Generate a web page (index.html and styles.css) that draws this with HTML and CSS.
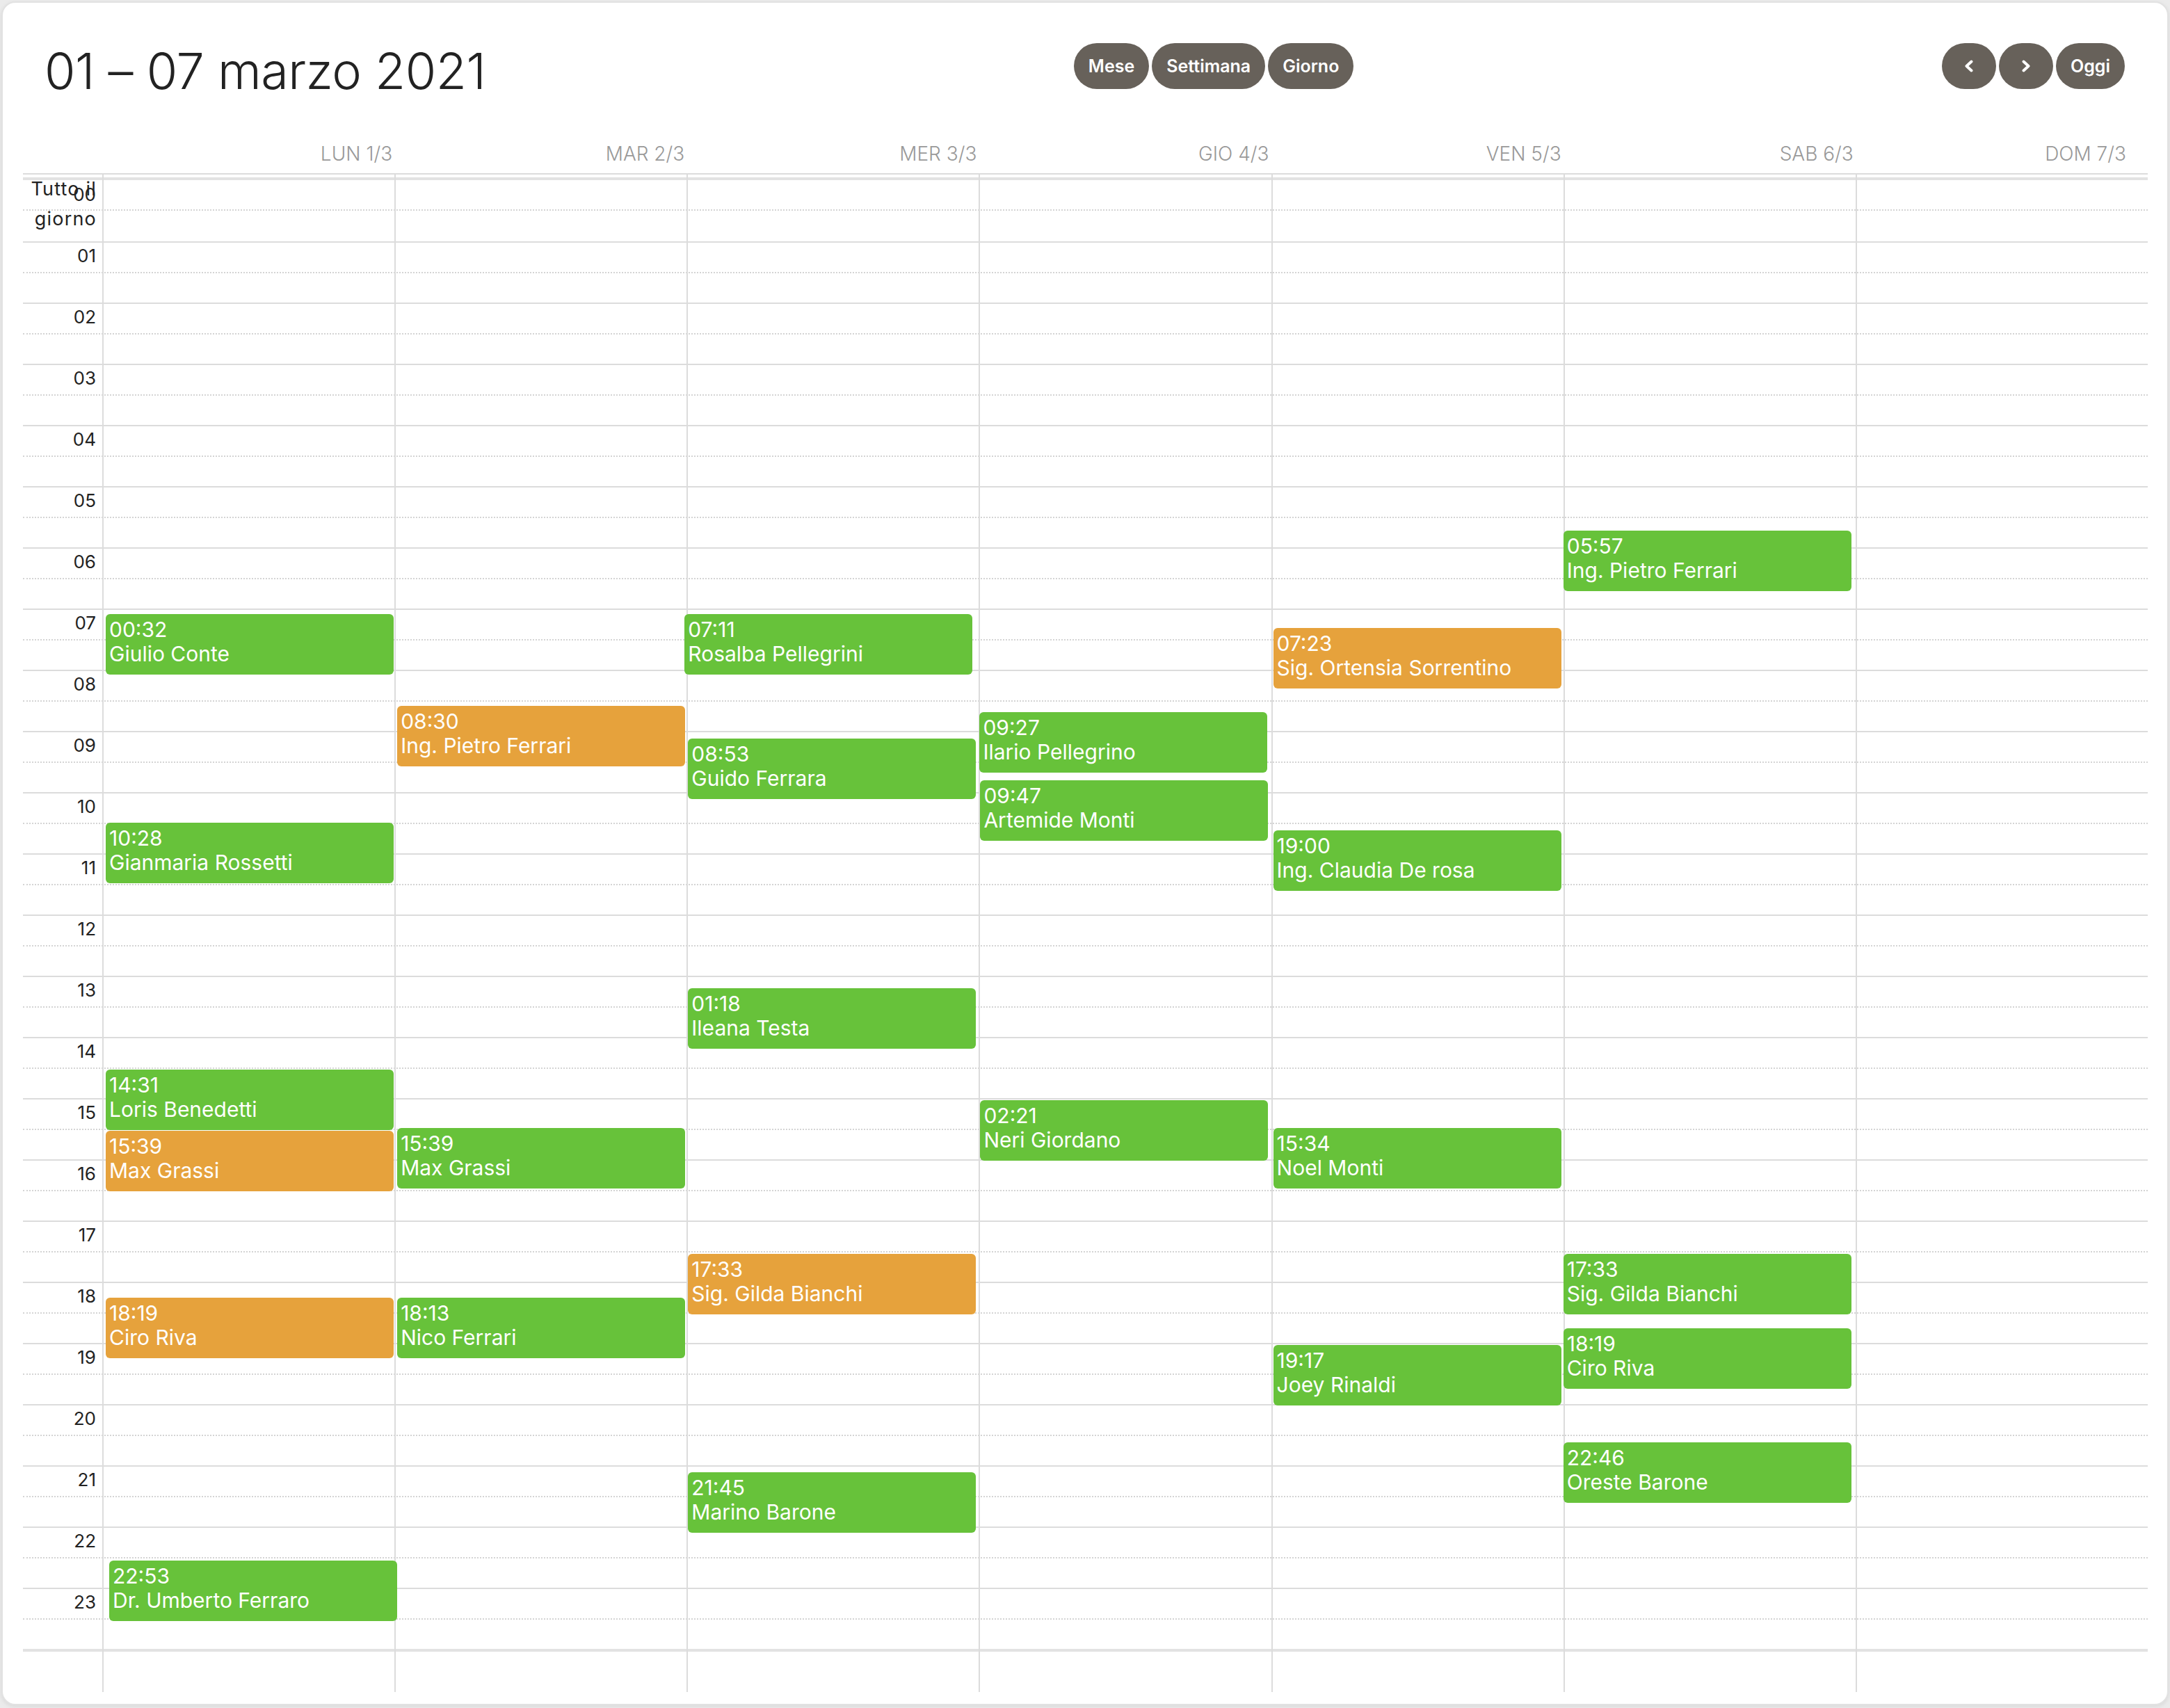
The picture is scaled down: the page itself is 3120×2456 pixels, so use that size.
FILE: index.html
```
<!DOCTYPE html>
<html lang="it">
<head>
<meta charset="utf-8">
<title>Calendario settimana</title>
<link rel="stylesheet" href="styles.css">
</head>
<body>
<div class="card">
  <div class="toolbar">
    <h2 class="title">01 – 07 marzo 2021</h2>
    <div class="btn-group">
      <button class="btn">Mese</button>
      <button class="btn">Settimana</button>
      <button class="btn">Giorno</button>
    </div>
    <div class="btn-group">
      <button class="btn btn-icon" aria-label="precedente"><svg class="chev" viewBox="0 0 16 18"><path d="M11.5 2.5 L4.5 9 L11.5 15.5"/></svg></button>
      <button class="btn btn-icon" aria-label="successivo"><svg class="chev" viewBox="0 0 16 18"><path d="M4.5 2.5 L11.5 9 L4.5 15.5"/></svg></button>
      <button class="btn">Oggi</button>
    </div>
  </div>

  <div class="head">
    <div class="head-axis"></div>
    <div class="head-cell">LUN 1/3</div>
    <div class="head-cell">MAR 2/3</div>
    <div class="head-cell">MER 3/3</div>
    <div class="head-cell">GIO 4/3</div>
    <div class="head-cell">VEN 5/3</div>
    <div class="head-cell">SAB 6/3</div>
    <div class="head-cell last">DOM 7/3</div>
  </div>

  <div class="tg">
    <div class="lines">
      <div class="allday"><span class="allday-label">Tutto il<br>giorno</span></div>
      <div class="divider"></div>
      <div class="hour"><span class="lbl">00</span><div class="half"></div></div>
      <div class="hour"><span class="lbl">01</span><div class="half"></div></div>
      <div class="hour"><span class="lbl">02</span><div class="half"></div></div>
      <div class="hour"><span class="lbl">03</span><div class="half"></div></div>
      <div class="hour"><span class="lbl">04</span><div class="half"></div></div>
      <div class="hour"><span class="lbl">05</span><div class="half"></div></div>
      <div class="hour"><span class="lbl">06</span><div class="half"></div></div>
      <div class="hour"><span class="lbl">07</span><div class="half"></div></div>
      <div class="hour"><span class="lbl">08</span><div class="half"></div></div>
      <div class="hour"><span class="lbl">09</span><div class="half"></div></div>
      <div class="hour"><span class="lbl">10</span><div class="half"></div></div>
      <div class="hour"><span class="lbl">11</span><div class="half"></div></div>
      <div class="hour"><span class="lbl">12</span><div class="half"></div></div>
      <div class="hour"><span class="lbl">13</span><div class="half"></div></div>
      <div class="hour"><span class="lbl">14</span><div class="half"></div></div>
      <div class="hour"><span class="lbl">15</span><div class="half"></div></div>
      <div class="hour"><span class="lbl">16</span><div class="half"></div></div>
      <div class="hour"><span class="lbl">17</span><div class="half"></div></div>
      <div class="hour"><span class="lbl">18</span><div class="half"></div></div>
      <div class="hour"><span class="lbl">19</span><div class="half"></div></div>
      <div class="hour"><span class="lbl">20</span><div class="half"></div></div>
      <div class="hour"><span class="lbl">21</span><div class="half"></div></div>
      <div class="hour"><span class="lbl">22</span><div class="half"></div></div>
      <div class="hour"><span class="lbl">23</span><div class="half"></div></div>
      <div class="grid-end"></div>
    </div>

    <div class="cols">
      <div class="col-axis"></div>

      <div class="col">
        <div class="ev green" style="top:632px;left:3px"><span>00:32</span><span>Giulio Conte</span></div>
        <div class="ev green" style="top:932px;left:3px"><span>10:28</span><span>Gianmaria Rossetti</span></div>
        <div class="ev green" style="top:1287px;left:3px"><span>14:31</span><span>Loris Benedetti</span></div>
        <div class="ev orange" style="top:1375px;left:3px"><span>15:39</span><span>Max Grassi</span></div>
        <div class="ev orange" style="top:1615px;left:3px"><span>18:19</span><span>Ciro Riva</span></div>
        <div class="ev green" style="top:1993px;left:8px"><span>22:53</span><span>Dr. Umberto Ferraro</span></div>
      </div>

      <div class="col">
        <div class="ev orange" style="top:764px;left:2px"><span>08:30</span><span>Ing. Pietro Ferrari</span></div>
        <div class="ev green" style="top:1371px;left:2px"><span>15:39</span><span>Max Grassi</span></div>
        <div class="ev green" style="top:1615px;left:2px"><span>18:13</span><span>Nico Ferrari</span></div>
      </div>

      <div class="col">
        <div class="ev green" style="top:632px;left:-5px"><span>07:11</span><span>Rosalba Pellegrini</span></div>
        <div class="ev green" style="top:811px;left:0px"><span>08:53</span><span>Guido Ferrara</span></div>
        <div class="ev green" style="top:1170px;left:0px"><span>01:18</span><span>Ileana Testa</span></div>
        <div class="ev orange" style="top:1552px;left:0px"><span>17:33</span><span>Sig. Gilda Bianchi</span></div>
        <div class="ev green" style="top:1866px;left:0px"><span>21:45</span><span>Marino Barone</span></div>
      </div>

      <div class="col">
        <div class="ev green" style="top:773px;left:-1px"><span>09:27</span><span>Ilario Pellegrino</span></div>
        <div class="ev green" style="top:871px;left:0px"><span>09:47</span><span>Artemide Monti</span></div>
        <div class="ev green" style="top:1331px;left:0px"><span>02:21</span><span>Neri Giordano</span></div>
      </div>

      <div class="col">
        <div class="ev orange" style="top:652px;left:1px"><span>07:23</span><span>Sig. Ortensia Sorrentino</span></div>
        <div class="ev green" style="top:943px;left:1px"><span>19:00</span><span>Ing. Claudia De rosa</span></div>
        <div class="ev green" style="top:1371px;left:1px"><span>15:34</span><span>Noel Monti</span></div>
        <div class="ev green" style="top:1683px;left:1px"><span>19:17</span><span>Joey Rinaldi</span></div>
      </div>

      <div class="col">
        <div class="ev green" style="top:512px;left:-2px"><span>05:57</span><span>Ing. Pietro Ferrari</span></div>
        <div class="ev green" style="top:1552px;left:-2px"><span>17:33</span><span>Sig. Gilda Bianchi</span></div>
        <div class="ev green" style="top:1659px;left:-2px"><span>18:19</span><span>Ciro Riva</span></div>
        <div class="ev green" style="top:1823px;left:-2px"><span>22:46</span><span>Oreste Barone</span></div>
      </div>

      <div class="col"></div>
    </div>
  </div>
</div>
</body>
</html>
```

FILE: styles.css
```
* {
  box-sizing: border-box;
}

html, body {
  margin: 0;
  padding: 0;
}

body {
  background: #ebebeb;
  font-family: Inter, "Liberation Sans", sans-serif;
  color: #222;
}

.card {
  margin: 2px 2px 4px 2px;
  height: 2450px;
  background: #fff;
  border: 2px solid #e2e2e2;
  border-radius: 20px;
  box-shadow: 0 2px 6px rgba(0, 0, 0, 0.08);
  overflow: hidden;
}

/* toolbar */
.toolbar {
  display: flex;
  justify-content: space-between;
  align-items: flex-start;
  margin: 58px 61px 0 60px;
}

.title {
  margin: 4px 0 0 0;
  font-size: 72px;
  line-height: 72px;
  font-weight: 300;
  color: #222;
  letter-spacing: -0.5px;
}

.btn-group {
  display: flex;
  gap: 4px;
}

.btn {
  height: 66px;
  padding: 0 21px;
  border: 0;
  border-radius: 33px;
  background: #67615a;
  color: #fff;
  font-family: Inter, "Liberation Sans", sans-serif;
  font-size: 25px;
  font-weight: 600;
  display: flex;
  align-items: center;
  justify-content: center;
}

.btn-icon {
  width: 78px;
  padding: 0;
}

.chev {
  width: 16px;
  height: 18px;
}

.chev path {
  fill: none;
  stroke: #fff;
  stroke-width: 4;
  stroke-linecap: round;
  stroke-linejoin: round;
}

/* column header */
.head {
  display: grid;
  grid-template-columns: 114px repeat(7, 1fr);
  margin: 0 28px 0 29px;
  height: 113px;
  border-bottom: 2px solid #dcdcdc;
}

.head-cell {
  display: flex;
  align-items: flex-end;
  justify-content: flex-end;
  padding: 0 3px 7px 0;
  font-size: 28px;
  line-height: 42px;
  font-weight: 300;
  color: #999;
}

.head-cell.last {
  padding-right: 31px;
}

/* time grid */
.tg {
  display: grid;
  margin: 0 28px 0 29px;
  height: 2182px;
}

.lines,
.cols {
  grid-area: 1 / 1;
}

.allday {
  height: 4px;
  position: relative;
}

.allday-label {
  position: absolute;
  top: -1px;
  left: 0;
  width: 106px;
  text-align: right;
  font-size: 27px;
  line-height: 43px;
  letter-spacing: 1.2px;
  color: #222;
  z-index: 2;
}

.divider {
  height: 4px;
  background: #e2e2e2;
}

.hour {
  height: 88px;
  border-top: 2px solid #dcdcdc;
  position: relative;
}

.divider + .hour {
  border-top: 0;
}

.half {
  height: 44px;
  border-bottom: 2px dotted #d4d4d4;
}

.lbl {
  position: absolute;
  top: -1px;
  left: 0;
  width: 105px;
  text-align: right;
  font-size: 26px;
  line-height: 39px;
  color: #222;
}

.divider + .hour .lbl {
  top: 1px;
}

.grid-end {
  height: 4px;
  background: #e2e2e2;
}

.cols {
  display: grid;
  grid-template-columns: 114px repeat(7, 1fr);
}

.col {
  position: relative;
  border-left: 2px solid #dcdcdc;
}

.ev {
  position: absolute;
  width: 414px;
  height: 87px;
  border-radius: 6px;
  padding: 5px 5px 0 5px;
  color: #fff;
  font-size: 30px;
  line-height: 35px;
  display: flex;
  flex-direction: column;
  z-index: 1;
  white-space: nowrap;
}

.green {
  background: #67c23a;
}

.orange {
  background: #e6a23c;
}
```
